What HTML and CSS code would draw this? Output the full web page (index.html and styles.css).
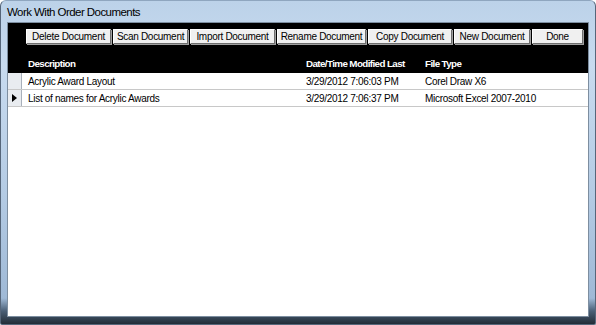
FILE: index.html
```html
<!DOCTYPE html>
<html lang="en">
<head>
    <meta charset="UTF-8">
    <title>Work With Order Documents</title>
    <link rel="stylesheet" href="styles.css">
</head>
<body>
    <div class="window">
        <div class="title-bar">
            <span class="title">Work With Order Documents</span>
        </div>
        <div class="client">
            <div class="form-header">
                <div class="button-row">
                    <button>Delete Document</button>
                    <button>Scan Document</button>
                    <button>Import Document</button>
                    <button>Rename Document</button>
                    <button>Copy Document</button>
                    <button>New Document</button>
                    <button>Done</button>
                </div>
                <div class="grid-row column-labels">
                    <span class="selector-spacer"></span>
                    <span>Description</span>
                    <span>Date/Time Modified Last</span>
                    <span>File Type</span>
                </div>
            </div>
            <div class="records">
                <div class="grid-row record">
                    <span class="selector"></span>
                    <span>Acrylic Award Layout</span>
                    <span>3/29/2012 7:06:03 PM</span>
                    <span>Corel Draw X6</span>
                </div>
                <div class="grid-row record current">
                    <span class="selector"><span class="arrow"></span></span>
                    <span>List of names for Acrylic Awards</span>
                    <span>3/29/2012 7:06:37 PM</span>
                    <span>Microsoft Excel 2007-2010</span>
                </div>
            </div>
        </div>
    </div>
</body>
</html>
```

FILE: styles.css
```css
body {
    margin: 0;
    width: 596px;
    height: 325px;
    overflow: hidden;
    font-family: "Liberation Sans", Arial, sans-serif;
}

.window {
    height: 325px;
    box-sizing: border-box;
    display: flex;
    flex-direction: column;
    padding: 0 6px 7px 6px;
    background: linear-gradient(to bottom, #bcd2e9 0%, #c8dbef 20%, #b4cbe4 60%, #9fb9d6 92%, #4a5f76 96%, #222c37 100%);
    border: 1px solid #56667a;
    border-top: 1px solid #8fa6bf;
    border-radius: 6px 6px 2px 2px;
}

.title-bar {
    height: 21px;
    display: flex;
    align-items: center;
}

.title {
    font-size: 11.5px;
    color: #000;
    letter-spacing: -0.55px;
}

.client {
    flex: 1;
    background: #ffffff;
    border: 1px solid #7d8ea0;
    display: flex;
    flex-direction: column;
}

.form-header {
    background: #000000;
    height: 50px;
    box-sizing: border-box;
    padding-top: 6px;
}

.button-row {
    display: grid;
    grid-template-columns: 85px 75px 85px 89px 84px 76px 51px;
    gap: 2px;
    padding-left: 18px;
}

.button-row button {
    height: 15px;
    padding: 0;
    font-family: "Liberation Sans", Arial, sans-serif;
    font-size: 10px;
    letter-spacing: -0.3px;
    color: #000;
    background: #f0f0f0;
    border: 1px solid;
    border-color: #ffffff #6d6d6d #6d6d6d #ffffff;
    box-shadow: 1px 1px 0 #a0a0a0;
    line-height: 12px;
}

.grid-row {
    display: grid;
    grid-template-columns: 14px 278px 119px 1fr;
    align-items: center;
}

.grid-row span {
    padding-left: 6px;
    white-space: nowrap;
}

.grid-row .selector,
.grid-row .selector-spacer {
    padding-left: 0;
}

.column-labels {
    margin-top: 14px;
    color: #ffffff;
    font-size: 9.8px;
    font-weight: bold;
    letter-spacing: -0.6px;
}

.records {
    flex: 1;
}

.record {
    height: 16px;
    font-size: 10px;
    letter-spacing: -0.3px;
    color: #000;
    border-bottom: 1px solid #c8c8c8;
}

.selector {
    height: 16px;
    box-sizing: border-box;
    background: #e9ecf0;
    border-right: 1px solid #a8b0bb;
    display: flex;
    align-items: center;
    justify-content: center;
}

.arrow {
    width: 0;
    height: 0;
    padding: 0 !important;
    border-top: 4px solid transparent;
    border-bottom: 4px solid transparent;
    border-left: 5px solid #000;
}
```
